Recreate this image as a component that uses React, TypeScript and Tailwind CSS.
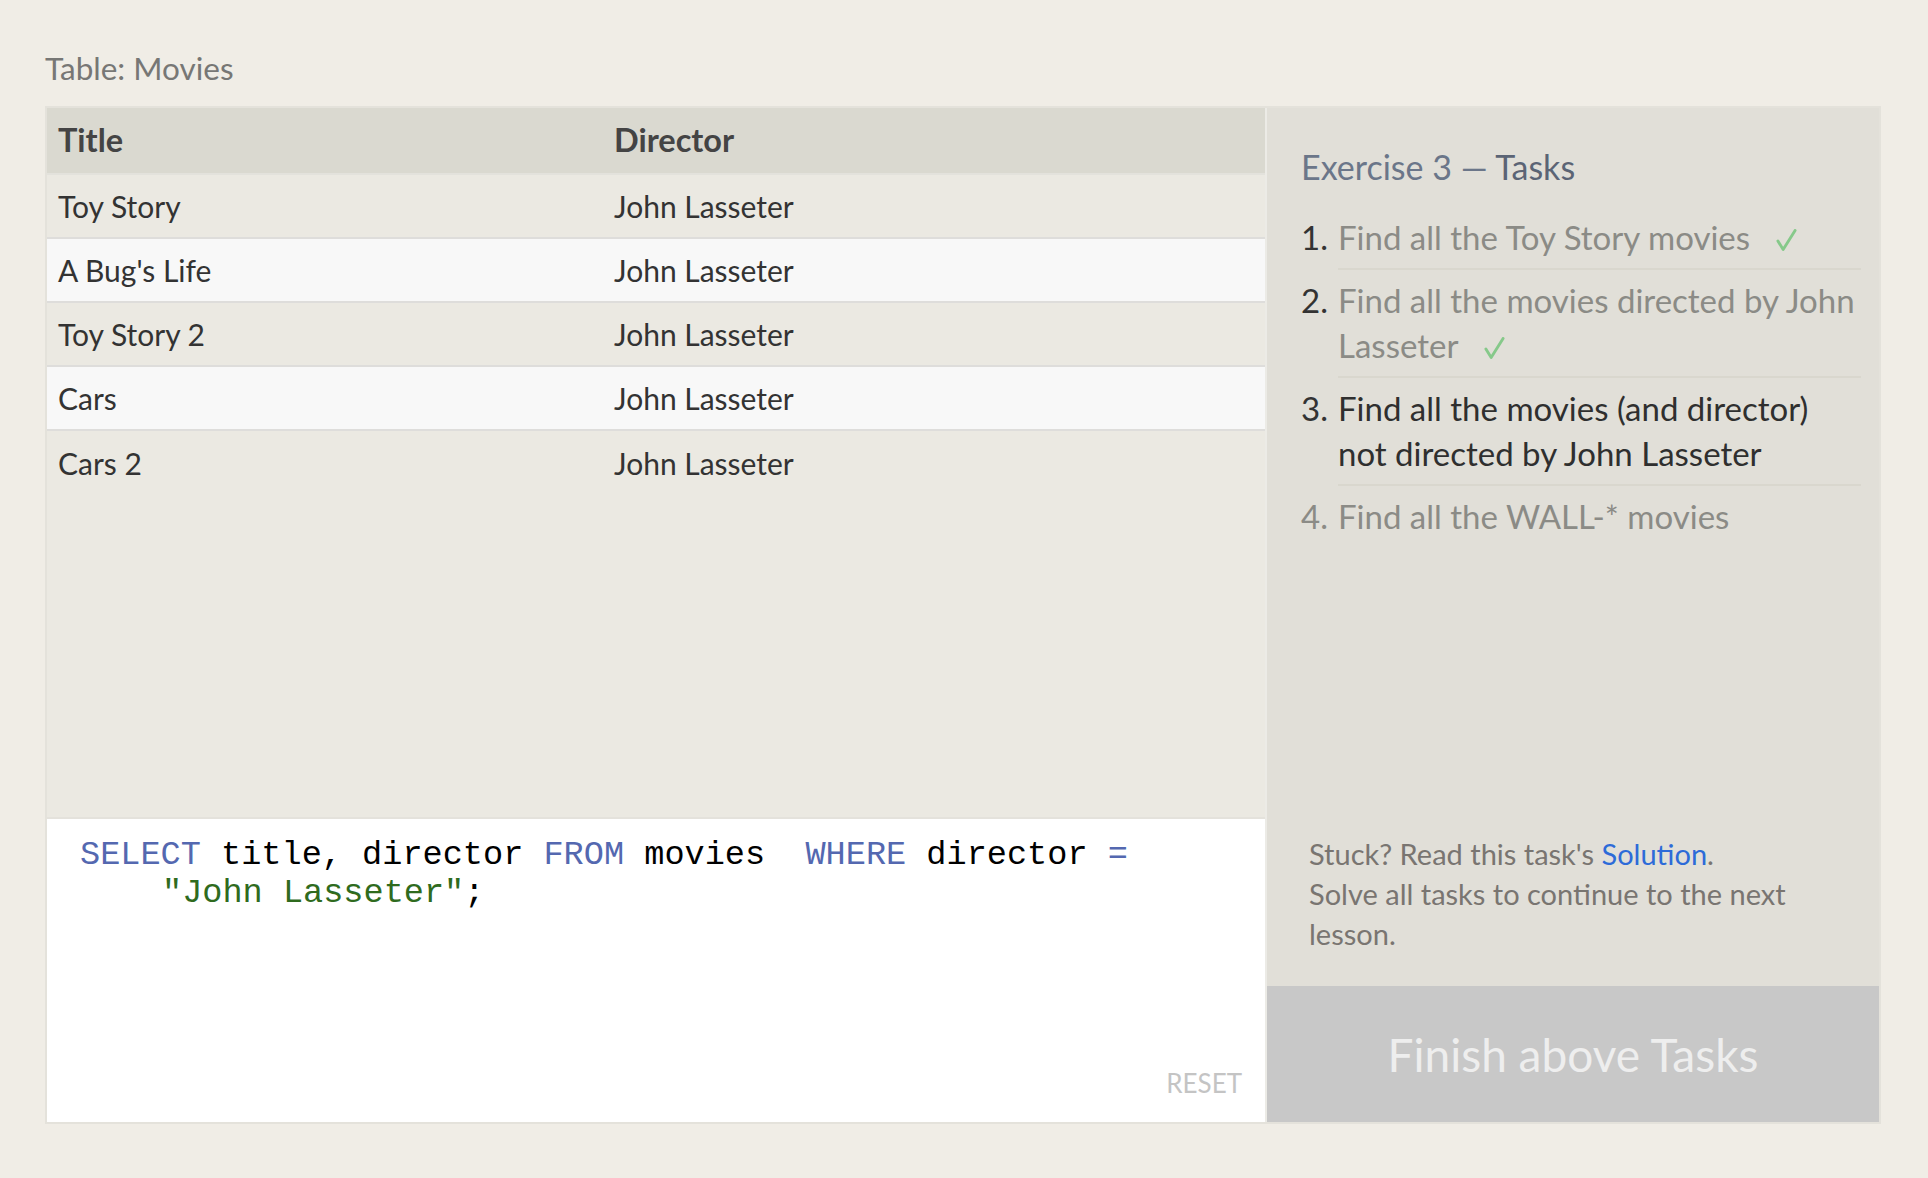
const rows = [
  { title: 'Toy Story', director: 'John Lasseter' },
  { title: "A Bug's Life", director: 'John Lasseter' },
  { title: 'Toy Story 2', director: 'John Lasseter' },
  { title: 'Cars', director: 'John Lasseter' },
  { title: 'Cars 2', director: 'John Lasseter' },
]

const tasks = [
  { text: 'Find all the Toy Story movies', state: 'done' },
  { text: 'Find all the movies directed by John Lasseter', state: 'done' },
  { text: 'Find all the movies (and director) not directed by John Lasseter', state: 'current' },
  { text: 'Find all the WALL-* movies', state: 'todo' },
] as const

function Check() {
  return (
    <svg viewBox="0 0 22 24" className="ml-[26px] inline-block h-[23px] w-[21px] align-[-2px]" fill="none">
      <path d="M2 12.5 L7.5 21.5 L20 1.5" stroke="#86c98a" strokeWidth="3" strokeLinecap="round" strokeLinejoin="round" />
    </svg>
  )
}

function TaskItem({ n, text, state, last }: { n: number; text: string; state: 'done' | 'current' | 'todo'; last: boolean }) {
  const numCls = state === 'todo' ? 'text-[#8b8b86]' : 'text-[#333333]'
  const textCls = state === 'current' ? 'text-[#2f2f2f]' : 'text-[#8b8b86]'
  return (
    <li className="flex">
      <span className={`w-[37px] shrink-0 py-[8px] ${numCls}`}>{n}.</span>
      <div className={`w-[523px] py-[8px] ${last ? '' : 'border-b-2 border-[#d9d7ce]'} ${textCls}`}>
        {text}
        {state === 'done' && <Check />}
      </div>
    </li>
  )
}

export default function App() {
  return (
    <div className="min-h-screen bg-[#f0ede6] px-[45px] pt-[46px] font-['Lato','Noto_Sans',sans-serif]">
      <p className="text-[31.5px] leading-[44px] text-[#777775]">Table: Movies</p>

      <div className="mt-[16px] flex w-[1836px] border-2 border-[#e4e2db]">
        {/* left: table + editor */}
        <div className="flex w-[1220px] flex-col border-r-2 border-[#ecebe6]">
          <div className="h-[709px] bg-[#ebe9e2] text-[30px] text-[#333333]">
            <div className="grid h-[67px] grid-cols-[556px_1fr] items-center border-b-2 border-[#e3e2dc] bg-[#dad9d0] text-[32.5px] font-bold text-[#444444]">
              <span className="px-[11px]">Title</span>
              <span className="px-[11px]">Director</span>
            </div>
            {rows.map((r, i) => (
              <div
                key={r.title}
                className={`grid h-[64px] grid-cols-[556px_1fr] items-center ${i < rows.length - 1 ? 'border-b-2 border-[#dedddb]' : ''} ${i % 2 === 1 ? 'bg-[#f8f8f8]' : 'bg-[#ebe9e2]'}`}
              >
                <span className="px-[11px]">{r.title}</span>
                <span className="px-[11px]">{r.director}</span>
              </div>
            ))}
          </div>

          {/* editor */}
          <div className="relative h-[305px] border-t-2 border-[#e4e2dc] bg-white pl-[33px] pt-[17px] font-['Liberation_Mono',monospace] text-[33.6px] leading-[38px] whitespace-pre text-black">
            <div>
              <span className="text-[#5468b0]">SELECT</span> title, director <span className="text-[#5468b0]">FROM</span> movies{'  '}
              <span className="text-[#5468b0]">WHERE</span> director <span className="text-[#5468b0]">=</span>
            </div>
            <div className="pl-[82px]">
              <span className="text-[#2f6b1e]">"John Lasseter"</span>;
            </div>
            <span className="absolute bottom-[20px] right-[23px] font-['Lato','Noto_Sans',sans-serif] text-[26px] text-[#c4c4c4]">RESET</span>
          </div>
        </div>

        {/* right: tasks */}
        <div className="flex w-[612px] flex-col bg-[#e1dfd8]">
          <div className="flex-1 pl-[34px] pr-[16px] pt-[37px]">
            <h2 className="text-[34px] leading-[44px] text-[#6b7689]">
              Exercise 3 — <span className="text-[#5b6475]">Tasks</span>
            </h2>
            <ol className="mt-[18px] text-[33px] leading-[45px]">
              {tasks.map((t, i) => (
                <TaskItem key={i} n={i + 1} text={t.text} state={t.state} last={i === tasks.length - 1} />
              ))}
            </ol>
          </div>
          <div className="pb-[32px] pl-[42px] pr-[20px] text-[29px] leading-[40px] text-[#797571]">
            Stuck? Read this task's <span className="text-[#2d6bd8]">Solution</span>.
            <br />
            Solve all tasks to continue to the next lesson.
          </div>
          <div className="flex h-[136px] items-center justify-center bg-[#c8c8c8] text-[46px] text-[#eeeeee]">
            Finish above Tasks
          </div>
        </div>
      </div>
    </div>
  )
}
